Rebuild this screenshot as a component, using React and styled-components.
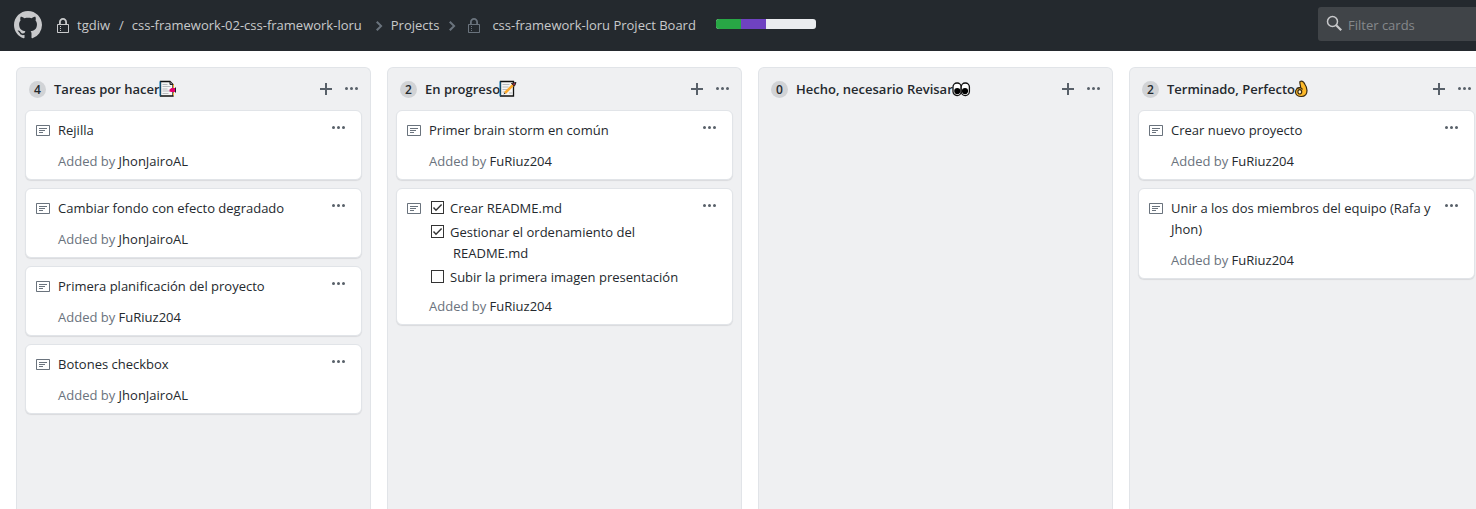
import React from "react";
import styled, { createGlobalStyle } from "styled-components";

const GlobalStyle = createGlobalStyle`
  *, *::before, *::after { box-sizing: border-box; }
  body {
    margin: 0;
    background: #fff;
    color: #24292e;
    font-family: "Open Sans", "Noto Sans", sans-serif;
    font-size: 13px;
    line-height: 21px;
    overflow-x: hidden;
  }
`;

const Page = styled.div`
  display: flex;
  flex-direction: column;
  min-height: 100vh;
`;

const TopBar = styled.header`
  display: flex;
  align-items: center;
  height: 51px;
  padding-left: 14px;
  background: #24292e;
  color: #c8c9cb;
`;

const HomeLink = styled.a`
  display: flex;
  margin-right: 15px;
  margin-bottom: 2px;
  color: #c8c9cb;
`;

const Crumbs = styled.nav`
  display: flex;
  align-items: center;
  white-space: nowrap;
`;

const CrumbLink = styled.a`
  color: #c8c9cb;
  text-decoration: none;
`;

const Slash = styled.span`
  margin: 0 8px 0 9px;
`;

const Icon = styled.svg`
  display: block;
  flex: none;
  fill: currentColor;
`;

const CrumbIcon = styled(Icon)`
  margin: 0 ${(p) => p.$after}px 0 ${(p) => p.$before}px;
  color: ${(p) => (p.$dim ? "#6a737d" : "#c8c9cb")};
`;

const BoardName = styled.h1`
  margin: 0;
  font-size: 13px;
  font-weight: 400;
`;

const Progress = styled.div`
  display: flex;
  width: 100px;
  height: 10px;
  margin: 0 20px 3px;
  overflow: hidden;
  border-radius: 3px;
  background: #eaecef;
`;

const Segment = styled.span`
  width: 25%;
  background: ${(p) => p.$color};
`;

const Search = styled.label`
  display: flex;
  align-items: center;
  gap: 4px;
  width: 158px;
  height: 34px;
  margin: 0 0 3px auto;
  padding-left: 8px;
  border-radius: 3px 0 0 3px;
  background: #404448;
`;

const SearchInput = styled.input`
  flex: 1;
  min-width: 0;
  padding: 2px 0 0;
  border: 0;
  outline: 0;
  background: transparent;
  color: #fff;
  font: inherit;
  &::placeholder { color: #85888b; opacity: 1; }
`;

const Board = styled.main`
  display: flex;
  flex: 1;
  gap: 16px;
  padding: 16px 16px 0;
  overflow: hidden;
`;

const ColumnBox = styled.section`
  flex: 0 0 355px;
  padding: 0 8px;
  border: 1px solid #e1e4e8;
  border-bottom: 0;
  border-radius: 6px 6px 0 0;
  background: #eff0f2;
`;

const ColumnHead = styled.header`
  display: flex;
  align-items: center;
  height: 42px;
  padding: 0 4px;
`;

const Count = styled.span`
  min-width: 17px;
  height: 17px;
  margin-right: 8px;
  border-radius: 9px;
  background: #d1d3d6;
  font-size: 12px;
  font-weight: 600;
  line-height: 17px;
  text-align: center;
`;

const ColumnTitle = styled.h2`
  display: flex;
  align-items: center;
  margin: 0;
  font-size: 13px;
  font-weight: 600;
  white-space: nowrap;
`;

const EmojiIcon = styled(Icon)`
  margin-left: -1px;
`;

const IconButton = styled.button`
  display: flex;
  padding: 0;
  border: 0;
  background: none;
  color: #586069;
  cursor: pointer;
`;

const Actions = styled.div`
  display: flex;
  align-items: center;
  gap: 13px;
  margin-left: auto;
`;

const CardList = styled.div`
  display: flex;
  flex-direction: column;
  gap: 8px;
`;

const CardBox = styled.article`
  display: flex;
  align-items: flex-start;
  padding: 9px 16px 7px 10px;
  border: 1px solid #e1e4e8;
  border-radius: 6px;
  background: #fff;
  box-shadow: 0 1px 1px rgba(27, 31, 35, 0.1);
`;

const NoteIcon = styled(Icon)`
  margin: 3px 8px 0 0;
  color: #6a737d;
`;

const CardBody = styled.div`
  flex: 1;
  min-width: 0;
`;

const CardText = styled.p`
  margin: 0 0 10px;
`;

const Tasks = styled.ul`
  display: flex;
  flex-direction: column;
  gap: 3px;
  margin: 0 0 8px;
  padding: 0;
  list-style: none;
`;

const TaskLabel = styled.label`
  display: block;
  padding-left: 24px;
  text-indent: -22px;
`;

const TaskBox = styled.input`
  appearance: none;
  width: 13px;
  height: 13px;
  margin: 0 6px 0 0;
  border: 1px solid #333;
  background: #fff;
  vertical-align: -1px;
  &:checked {
    background: url("data:image/svg+xml,%3Csvg xmlns='http://www.w3.org/2000/svg' viewBox='0 0 11 11'%3E%3Cpath d='M1.5 5.5 4 8.3 9.6 2.4' fill='none' stroke='%23333' stroke-width='1.4'/%3E%3C/svg%3E") center / 11px 11px no-repeat;
  }
`;

const Meta = styled.small`
  display: block;
  color: #6a737d;
  font-size: 13px;
`;

const Author = styled.a`
  color: #24292e;
  text-decoration: none;
`;

const PATHS = {
  lock: "M4 13H3v-1h1v1zm8-6v7c0 .55-.45 1-1 1H1c-.55 0-1-.45-1-1V7c0-.55.45-1 1-1h1V4c0-2.2 1.8-4 4-4s4 1.8 4 4v2h1c.55 0 1 .45 1 1zM3.8 6h4.41V4c0-1.22-.98-2.2-2.2-2.2-1.22 0-2.2.98-2.2 2.2v2H3.8zM11 7H1v7h10V7zM4 8H3v1h1V8zm0 2H3v1h1v-1z",
  chevron: "M7.5 8l-5 5L1 11.5 4.75 8 1 4.5 2.5 3l5 5z",
  note: "M3 10h4V9H3v1zm0-2h6V7H3v1zm0-2h8V5H3v1zm10 6H1V3h12v9zM1 2c-.55 0-1 .45-1 1v9c0 .55.45 1 1 1h12c.55 0 1-.45 1-1V3c0-.55-.45-1-1-1H1z",
  plus: "M12 9H7v5H5V9H0V7h5V2h2v5h5v2z",
  dots: "M1.5 9a1.5 1.5 0 100-3 1.5 1.5 0 000 3zm5 0a1.5 1.5 0 100-3 1.5 1.5 0 000 3zM13 7.5a1.5 1.5 0 11-3 0 1.5 1.5 0 013 0z",
  github: "M8 0C3.58 0 0 3.58 0 8c0 3.54 2.29 6.53 5.47 7.59.4.07.55-.17.55-.38 0-.19-.01-.82-.01-1.49-2.01.37-2.53-.49-2.69-.94-.09-.23-.48-.94-.82-1.13-.28-.15-.68-.52-.01-.53.63-.01 1.08.58 1.23.82.72 1.21 1.87.87 2.33.66.07-.52.28-.87.51-1.07-1.78-.2-3.64-.89-3.64-3.95 0-.87.31-1.59.82-2.15-.08-.2-.36-1.02.08-2.12 0 0 .67-.21 2.2.82.64-.18 1.32-.27 2-.27.68 0 1.36.09 2 .27 1.53-1.04 2.2-.82 2.2-.82.44 1.1.16 1.92.08 2.12.51.56.82 1.27.82 2.15 0 3.07-1.87 3.75-3.65 3.95.29.25.54.73.54 1.48 0 1.07-.01 1.93-.01 2.2 0 .21.15.46.55.38A8.013 8.013 0 0016 8c0-4.42-3.58-8-8-8z",
};

const LockIcon = (props) => (
  <CrumbIcon width="12" height="16" viewBox="0 0 12 16" aria-hidden="true" {...props}>
    <path d={PATHS.lock} fillRule="evenodd" />
  </CrumbIcon>
);

const Chevron = ({ before }) => (
  <CrumbIcon $dim $before={before} $after={8} width="8" height="16" viewBox="0 0 8 16" aria-hidden="true">
    <path d={PATHS.chevron} />
  </CrumbIcon>
);

const EMOJI = {
  tabs: (
    <>
      <path d="M1.500 1.500h9.500l3 3V16H1.500z" fill="#f6f6f6" stroke="#111" strokeWidth="1.300" />
      <path d="M1 1.500v14.500" stroke="#1786c8" />
      <path d="M11 1.500v3h3" fill="#888" stroke="#222" />
      <path d="M3.500 4.500h5M3.500 6.500h8M3.500 9h5M3.500 11h8M3.500 13.500h6" stroke="#b9bcc0" />
      <path d="M14.500 4.500v3.500M14.500 12.500v3" stroke="#fba92b" />
      <path d="M10.500 9.500l2-1.500H16v4h-3.500l-2-.5z" fill="#e3006d" />
      <path d="M16.500 7.500v5" stroke="#222" />
    </>
  ),
  memo: (
    <>
      <path d="M1.500 1.500h13V16h-13z" fill="#f6f6f6" stroke="#111" strokeWidth="1.300" />
      <path d="M1 1.500v14.500" stroke="#1786c8" />
      <path d="M3.500 4.500h7M3.500 7h6M3.500 9.500h5M3.500 12h3M10 13h3" stroke="#b9bcc0" />
      <path d="M6 13 14 5" stroke="#fba92b" strokeWidth="2.600" />
      <path d="M12.500 3.500 17 2.500l-1.500 3.500z" fill="#c4314b" stroke="#222" />
      <path d="M4.500 14.500l1-2 1 1z" fill="#222" />
    </>
  ),
  eyes: (
    <>
      <rect x="1" y="3" width="8.200" height="12.500" rx="4" fill="#fff" stroke="#111" strokeWidth="1.300" />
      <rect x="9.200" y="3" width="8.200" height="12.500" rx="4" fill="#fff" stroke="#111" strokeWidth="1.300" />
      <circle cx="5.300" cy="11" r="3.100" fill="#000" />
      <circle cx="13" cy="11" r="3.100" fill="#000" />
    </>
  ),
  ok: (
    <>
      <path d="M6 1.500c2.500-1 4 .5 5 3 1.300 1.800 2 3.500 2 6 0 3.700-2.200 6-5.700 6-3.300 0-5.800-1.500-5.800-4.500C1.500 9.500 3.500 8 6.500 7.500 7 5.500 5.200 3.500 6 1.500z" fill="#fdb92a" stroke="#3a2a10" strokeWidth="1.200" />
      <ellipse cx="5.800" cy="11.800" rx="1.900" ry="2.200" fill="#fff3d0" stroke="#3a2a10" strokeWidth="1.200" />
      <path d="M2.500 8.500c2.500-1.500 5-1.200 6 1" fill="none" stroke="#3a2a10" strokeWidth="1.200" />
    </>
  ),
};

const Emoji = ({ name, label }) => (
  <EmojiIcon width="19" height="18" viewBox="0 0 19 18" role="img" aria-label={label}>
    {EMOJI[name]}
  </EmojiIcon>
);

const DotsButton = ({ label }) => (
  <IconButton type="button" aria-label={label}>
    <Icon width="13" height="16" viewBox="0 0 13 16" aria-hidden="true">
      <path d={PATHS.dots} />
    </Icon>
  </IconButton>
);

const COLUMNS = [
  {
    title: "Tareas por hacer",
    emoji: "tabs",
    cards: [
      { text: "Rejilla", by: "JhonJairoAL" },
      { text: "Cambiar fondo con efecto degradado", by: "JhonJairoAL" },
      { text: "Primera planificación del proyecto", by: "FuRiuz204" },
      { text: "Botones checkbox", by: "JhonJairoAL" },
    ],
  },
  {
    title: "En progreso",
    emoji: "memo",
    cards: [
      { text: "Primer brain storm en común", by: "FuRiuz204" },
      {
        tasks: [
          ["Crear README.md", true],
          ["Gestionar el ordenamiento del README.md", true],
          ["Subir la primera imagen presentación", false],
        ],
        by: "FuRiuz204",
      },
    ],
  },
  { title: "Hecho, necesario Revisar", emoji: "eyes", cards: [] },
  {
    title: "Terminado, Perfecto",
    emoji: "ok",
    cards: [
      { text: "Crear nuevo proyecto", by: "FuRiuz204" },
      { text: "Unir a los dos miembros del equipo (Rafa y Jhon)", by: "FuRiuz204" },
    ],
  },
];

const Card = ({ text, tasks, by }) => (
  <CardBox>
    <NoteIcon width="14" height="16" viewBox="0 0 14 16" aria-hidden="true">
      <path d={PATHS.note} fillRule="evenodd" />
    </NoteIcon>
    <CardBody>
      {text && <CardText>{text}</CardText>}
      {tasks && (
        <Tasks>
          {tasks.map(([name, done]) => (
            <li key={name}>
              <TaskLabel>
                <TaskBox type="checkbox" defaultChecked={done} />
                {name}
              </TaskLabel>
            </li>
          ))}
        </Tasks>
      )}
      <Meta>
        Added by <Author href="#">{by}</Author>
      </Meta>
    </CardBody>
    <DotsButton label="Card menu" />
  </CardBox>
);

const Column = ({ title, emoji, cards }) => (
  <ColumnBox>
    <ColumnHead>
      <Count>{cards.length}</Count>
      <ColumnTitle>
        {title}
        <Emoji name={emoji} label={emoji} />
      </ColumnTitle>
      <Actions>
        <IconButton type="button" aria-label="Add a note">
          <Icon width="12" height="16" viewBox="0 0 12 16" aria-hidden="true">
            <path d={PATHS.plus} />
          </Icon>
        </IconButton>
        <DotsButton label="Column menu" />
      </Actions>
    </ColumnHead>
    <CardList>
      {cards.map((card, i) => (
        <Card key={i} {...card} />
      ))}
    </CardList>
  </ColumnBox>
);

export default function App() {
  return (
    <Page>
      <GlobalStyle />
      <TopBar>
        <HomeLink href="#" aria-label="Home">
          <Icon width="28" height="28" viewBox="0 0 16 16" aria-hidden="true">
            <path d={PATHS.github} />
          </Icon>
        </HomeLink>
        <Crumbs aria-label="Breadcrumb">
          <LockIcon $before={0} $after={8} />
          <CrumbLink href="#">tgdiw</CrumbLink>
          <Slash>/</Slash>
          <CrumbLink href="#">css-framework-02-css-framework-loru</CrumbLink>
          <Chevron before={13} />
          <CrumbLink href="#">Projects</CrumbLink>
          <Chevron before={9} />
          <LockIcon $dim $before={4} $after={12} />
          <BoardName>css-framework-loru Project Board</BoardName>
        </Crumbs>
        <Progress role="img" aria-label="Project progress">
          <Segment $color="#28a745" />
          <Segment $color="#6f42c1" />
        </Progress>
        <Search>
          <Icon width="18" height="18" viewBox="0 0 18 18" aria-hidden="true">
            <circle cx="6.500" cy="6.500" r="5" fill="none" stroke="#c8c9cb" strokeWidth="1.500" />
            <path d="M10.200 10.200l5 5" fill="none" stroke="#c8c9cb" strokeWidth="2.200" />
          </Icon>
          <SearchInput type="text" placeholder="Filter cards" aria-label="Filter cards" />
        </Search>
      </TopBar>
      <Board>
        {COLUMNS.map((column) => (
          <Column key={column.title} {...column} />
        ))}
      </Board>
    </Page>
  );
}
